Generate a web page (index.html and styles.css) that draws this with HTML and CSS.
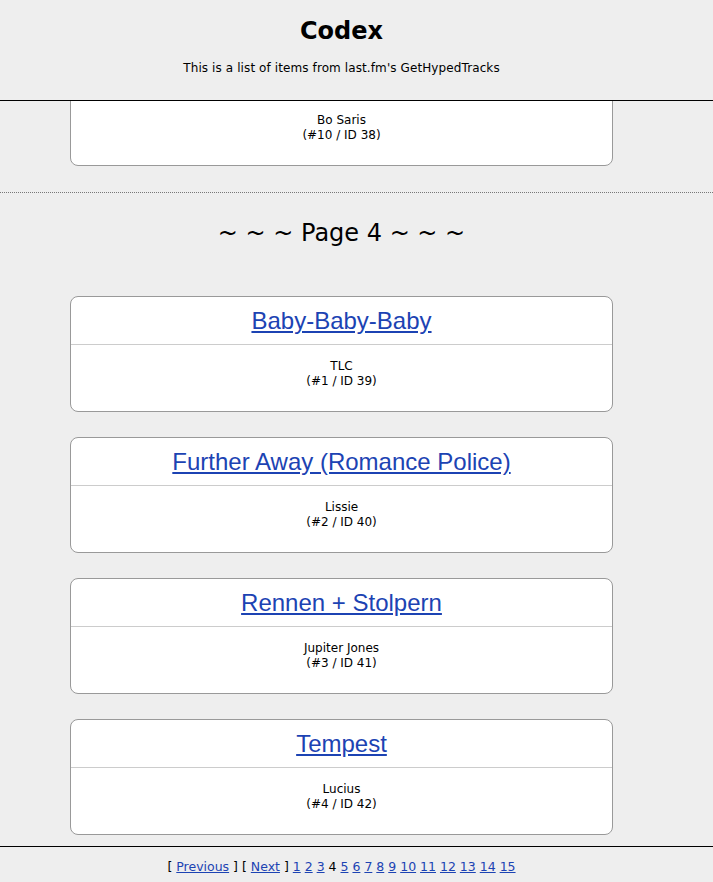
FILE: index.html
```html
<!DOCTYPE html>
<html lang="en">
<head>
    <meta charset="UTF-8">
    <meta name="viewport" content="width=device-width, initial-scale=1.0">
    <title>Codex</title>
    <link rel="stylesheet" href="styles.css">
</head>
<body>
    <header class="site-header">
        <h1>Codex</h1>
        <p>This is a list of items from last.fm's GetHypedTracks</p>
    </header>

    <main class="scroller">
        <div class="feed">
            <section class="page">
                <div class="track">
                    <div class="track-title"><a href="#">Sweet Fantasy</a></div>
                    <div class="track-info">Bo Saris<br>(#10 / ID 38)</div>
                </div>
            </section>

            <hr class="page-break">

            <section class="page">
                <h2 class="page-heading">~ ~ ~ Page 4 ~ ~ ~</h2>

                <div class="track">
                    <div class="track-title"><a href="#">Baby-Baby-Baby</a></div>
                    <div class="track-info">TLC<br>(#1 / ID 39)</div>
                </div>
                <div class="track">
                    <div class="track-title"><a href="#">Further Away (Romance Police)</a></div>
                    <div class="track-info">Lissie<br>(#2 / ID 40)</div>
                </div>
                <div class="track">
                    <div class="track-title"><a href="#">Rennen + Stolpern</a></div>
                    <div class="track-info">Jupiter Jones<br>(#3 / ID 41)</div>
                </div>
                <div class="track">
                    <div class="track-title"><a href="#">Tempest</a></div>
                    <div class="track-info">Lucius<br>(#4 / ID 42)</div>
                </div>
                <div class="track">
                    <div class="track-title"><a href="#">Bottled In Cork</a></div>
                    <div class="track-info">The Dodos<br>(#5 / ID 43)</div>
                </div>
            </section>
        </div>
    </main>

    <footer class="pager">
        [ <a href="#">Previous</a> ] [ <a href="#">Next</a> ]
        <a href="#">1</a> <a href="#">2</a> <a href="#">3</a> 4 <a href="#">5</a>
        <a href="#">6</a> <a href="#">7</a> <a href="#">8</a> <a href="#">9</a>
        <a href="#">10</a> <a href="#">11</a> <a href="#">12</a> <a href="#">13</a>
        <a href="#">14</a> <a href="#">15</a>
    </footer>
</body>
</html>
```

FILE: styles.css
```css
html, body {
    height: 100%;
}
body {
    margin: 0;
    display: flex;
    flex-direction: column;
    overflow: hidden;
    background-color: #eee;
    color: #000;
    font-family: "DejaVu Sans", Verdana, sans-serif;
    font-size: 12px;
}
a {
    color: #1c43b3;
}
.site-header {
    height: 100px;
    padding-right: 30px;
    border-bottom: 1px solid #000;
    text-align: center;
}
.site-header h1 {
    margin: 0;
    padding-top: 16px;
    font-size: 24px;
    line-height: 30px;
}
.site-header p {
    margin: 15px 0 0;
    line-height: 15px;
    letter-spacing: 0.1px;
}
.scroller {
    flex: 1;
    overflow: hidden;
}
.feed {
    margin-top: -51px;
}
.track {
    margin: 0 100px 25px 70px;
    background-color: #fff;
    border: 1px solid #999;
    border-radius: 8px;
    text-align: center;
}
.track-title {
    height: 46px;
    padding-top: 1px;
    border-bottom: 1px solid #ccc;
    font-family: "Liberation Sans", Arial, sans-serif;
    font-size: 24px;
    line-height: 46px;
}
.track-info {
    padding: 14px 0 22px;
    line-height: 15px;
}
.page-break {
    margin: 26px 0 0;
    border: 0;
    border-top: 1px dotted #777;
}
.page-heading {
    margin: 24px 0 47px;
    padding-right: 30px;
    font-family: "DejaVu Sans", sans-serif;
    font-size: 24px;
    font-weight: normal;
    line-height: 32px;
    text-align: center;
}
.pager {
    height: 31px;
    padding: 4px 30px 0 0;
    border-top: 1px solid #000;
    font-size: 12.5px;
    line-height: 31px;
    text-align: center;
    white-space: nowrap;
}
```
